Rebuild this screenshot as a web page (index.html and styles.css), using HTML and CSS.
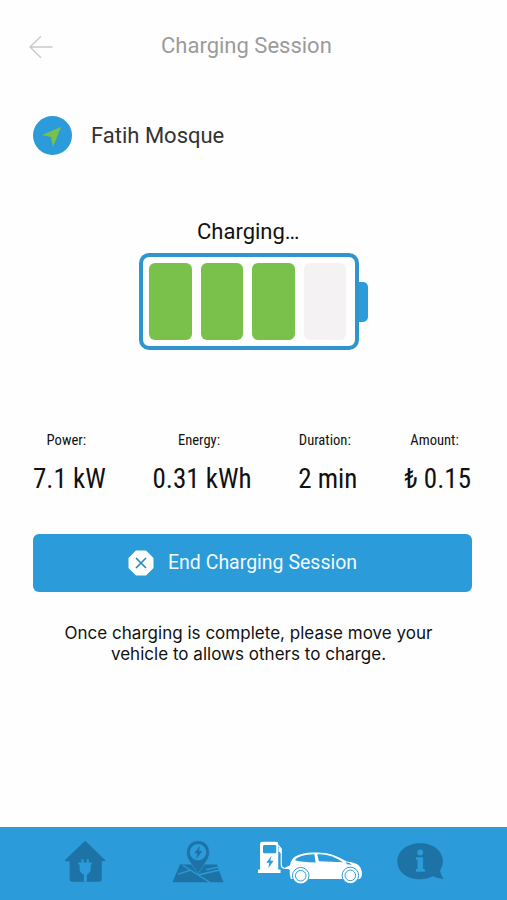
FILE: index.html
```html
<!DOCTYPE html>
<html lang="en">
<head>
    <meta charset="UTF-8">
    <meta name="viewport" content="width=device-width, initial-scale=1.0">
    <title>Charging Session</title>
    <link rel="stylesheet" href="styles.css">
</head>
<body>
    <header class="top-bar">
        <svg class="back" viewBox="0 0 24 24" fill="none" stroke="#c9c9c9" stroke-width="1.3">
            <path d="M23.5 12H1M12 1.2L1 12l11 10.8"/>
        </svg>
        <h1>Charging Session</h1>
    </header>

    <main>
        <div class="station">
            <svg class="station-icon" viewBox="0 0 39 39">
                <circle cx="19.5" cy="19.5" r="19.5" fill="#2b9bd9"/>
                <path d="M28 11L9 19l9 2L20 31z" fill="#79c14b"/>
            </svg>
            <span class="station-name">Fatih Mosque</span>
        </div>

        <div class="charging-label">Charging…</div>
        <div class="battery">
            <div class="battery-body">
                <div class="cell full"></div>
                <div class="cell full"></div>
                <div class="cell full"></div>
                <div class="cell"></div>
            </div>
            <div class="battery-tip"></div>
        </div>

        <div class="stats">
            <div class="stat">
                <span class="stat-label">Power:</span>
                <span class="stat-value">7.1 kW</span>
            </div>
            <div class="stat">
                <span class="stat-label">Energy:</span>
                <span class="stat-value">0.31 kWh</span>
            </div>
            <div class="stat">
                <span class="stat-label">Duration:</span>
                <span class="stat-value">2 min</span>
            </div>
            <div class="stat">
                <span class="stat-label">Amount:</span>
                <span class="stat-value">₺ 0.15</span>
            </div>
        </div>

        <button type="button" class="end-button">
            <svg class="end-icon" viewBox="0 0 26 26">
                <path d="M8 .5h10L25.500 8v10L18 25.500H8L.5 18V8z" fill="#fff"/>
                <path d="M8 8l10 10M18 8L8 18" stroke="#2b86b8" stroke-width="1.6"/>
            </svg>
            <span>End Charging Session</span>
        </button>

        <p class="note">Once charging is complete, please move your<br>vehicle to allows others to charge.</p>
    </main>

    <nav class="bottom-nav">
        <svg class="nav-home" viewBox="46 60 124 130">
            <path d="M107 62L168 121Q169 124 165 124H157V178Q157 186 149 186H68Q60 186 60 178V124H50Q45 124 47 120z" fill="#1d73a5"/>
            <path d="M96 118h6v10h10v-10h6v10h9v6h-3v13q0 11-12 18v21h-9v-21q-13-6-13-18v-13h-4v-6h10z" fill="#2b9bd9"/>
        </svg>
        <svg class="nav-map" viewBox="365 60 156 130">
            <path d="M388 134H500L520 188H366z" fill="#1d73a5"/>
            <path d="M382 163L420 152M398 137L482 190M446 165L512 150M468 150L504 142" stroke="#2b9bd9" stroke-width="4" fill="none"/>
            <path d="M443 162L418 125Q404 107 411 84Q421 62 443 62Q466 62 475 83Q482 105 468 125z" fill="#1d73a5" stroke="#2b9bd9" stroke-width="2"/>
            <circle cx="443" cy="97" r="25" fill="#2b9bd9"/>
            <path d="M449 78L431 100h10l-4 18 19-25h-10z" fill="#1d73a5"/>
        </svg>
        <svg class="nav-charge" viewBox="50 64 318 130">
            <path d="M58 150V73q0-7 7-7h41q7 0 7 7v77h7v11H52v-11z" fill="#fff"/>
            <rect x="67" y="76" width="40" height="25" rx="4" fill="#2b9bd9"/>
            <path d="M93 108L77 130h9l-3 16 16-22h-10z" fill="#2b9bd9"/>
            <path d="M113 77l9 10v48q0 12 14 12h13" fill="none" stroke="#fff" stroke-width="3.500"/>
            <path d="M114 82l8 6v14l-8-7z" fill="#fff"/>
            <path d="M133 145l16-8q2-16 15-26Q187 99 219 99Q262 98 283 108Q301 115 320 126Q353 129 361 143L366 158Q367 175 359 179H151Q146 165 148 151z" fill="#fff"/>
            <path d="M163 122Q174 106 222 104L226 129Q185 128 163 122z" fill="#2b9bd9"/>
            <path d="M231 104Q272 102 308 128L236 125z" fill="#2b9bd9"/>
            <path d="M317 128q12 1 19 8l-15-2z" fill="#2b9bd9"/>
            <g fill="#fff" stroke="#2b9bd9" stroke-width="3">
                <circle cx="181" cy="169" r="25"/>
                <circle cx="331" cy="168" r="25"/>
                <circle cx="181" cy="169" r="16"/>
                <circle cx="331" cy="168" r="16"/>
            </g>
        </svg>
        <svg class="nav-info" viewBox="470 70 142 112">
            <path d="M540 71C580 71 609 95 609 126Q609 141 600 153Q602 166 611 179Q592 178 578 171Q562 180 540 180C500 180 471 157 471 126C471 95 500 71 540 71z" fill="#1d73a5"/>
            <circle cx="540" cy="99" r="9" fill="#2b9bd9"/>
            <path d="M527 113h22v36h5v8h-27v-8h5v-28h-5z" fill="#2b9bd9"/>
        </svg>
    </nav>
</body>
</html>
```

FILE: styles.css
```css
* {
    box-sizing: border-box;
}
body {
    margin: 0;
    height: 900px;
    display: flex;
    flex-direction: column;
    background-color: #fefefe;
    font-family: Roboto, "Liberation Sans", sans-serif;
    color: #111;
    overflow: hidden;
}
.top-bar {
    display: flex;
    align-items: center;
    padding: 30px 0 0 29px;
    height: 62px;
}
.back {
    width: 24px;
    height: 24px;
    margin-top: 2px;
}
h1 {
    margin: 0 0 0 108px;
    font-size: 22px;
    line-height: 30px;
    font-weight: 400;
    color: #9b9b9b;
}
main {
    flex: 1;
    padding: 0 35px 0 33px;
}
.station {
    display: flex;
    align-items: center;
    margin-top: 54px;
}
.station-icon {
    width: 39px;
    height: 39px;
}
.station-name {
    margin-left: 19px;
    font-size: 22px;
    color: #333;
}
.charging-label {
    margin-top: 62px;
    padding-left: 164px;
    font-size: 22px;
    line-height: 30px;
}
.battery {
    display: flex;
    align-items: center;
    margin: 6px 0 0 106px;
}
.battery-body {
    display: flex;
    gap: 9px;
    width: 220px;
    height: 97px;
    padding: 6px;
    border: 4px solid #3095cd;
    border-radius: 10px;
}
.cell {
    width: 42.5px;
    height: 77px;
    background-color: #f4f2f3;
    border-radius: 6px;
}
.cell.full {
    background-color: #79c14b;
}
.battery-tip {
    width: 9px;
    height: 40px;
    background-color: #2b9bd9;
    border-radius: 0 5px 5px 0;
}
.stats {
    display: flex;
    justify-content: space-between;
    margin-top: 80px;
    padding-right: 1px;
    font-family: "Roboto Condensed", Roboto, sans-serif;
    font-stretch: 75%;
}
.stat {
    display: flex;
    flex-direction: column;
    align-items: center;
    white-space: nowrap;
}
.stat-label {
    margin-right: 6px;
    font-size: 14.6px;
    line-height: 20px;
}
.stat-value {
    margin-top: 11px;
    font-size: 27px;
    line-height: 36px;
}
.end-button {
    display: flex;
    align-items: center;
    width: 100%;
    height: 58px;
    margin-top: 36.5px;
    padding: 0 0 0 95px;
    border: none;
    border-radius: 6px;
    background-color: #2b9bd9;
    color: #f3faff;
    font-family: inherit;
    font-size: 19.5px;
}
.end-icon {
    width: 26px;
    height: 26px;
    margin-right: 14px;
}
.note {
    margin: 31px 0 0;
    padding-right: 8px;
    text-align: center;
    font-family: Inter, sans-serif;
    font-size: 17px;
    line-height: 21px;
    letter-spacing: 0.02px;
    white-space: nowrap;
}
.bottom-nav {
    display: flex;
    align-items: flex-start;
    height: 73px;
    padding: 13px 0 0 65px;
    background-color: #2b9bd9;
}
.nav-home {
    width: 41px;
    height: 43px;
}
.nav-map {
    width: 52px;
    height: 43px;
    margin-left: 66px;
}
.nav-charge {
    width: 106px;
    height: 43px;
    margin: 1px 0 0 33px;
}
.nav-info {
    width: 47px;
    height: 37px;
    margin: 3px 0 0 34px;
}
```
